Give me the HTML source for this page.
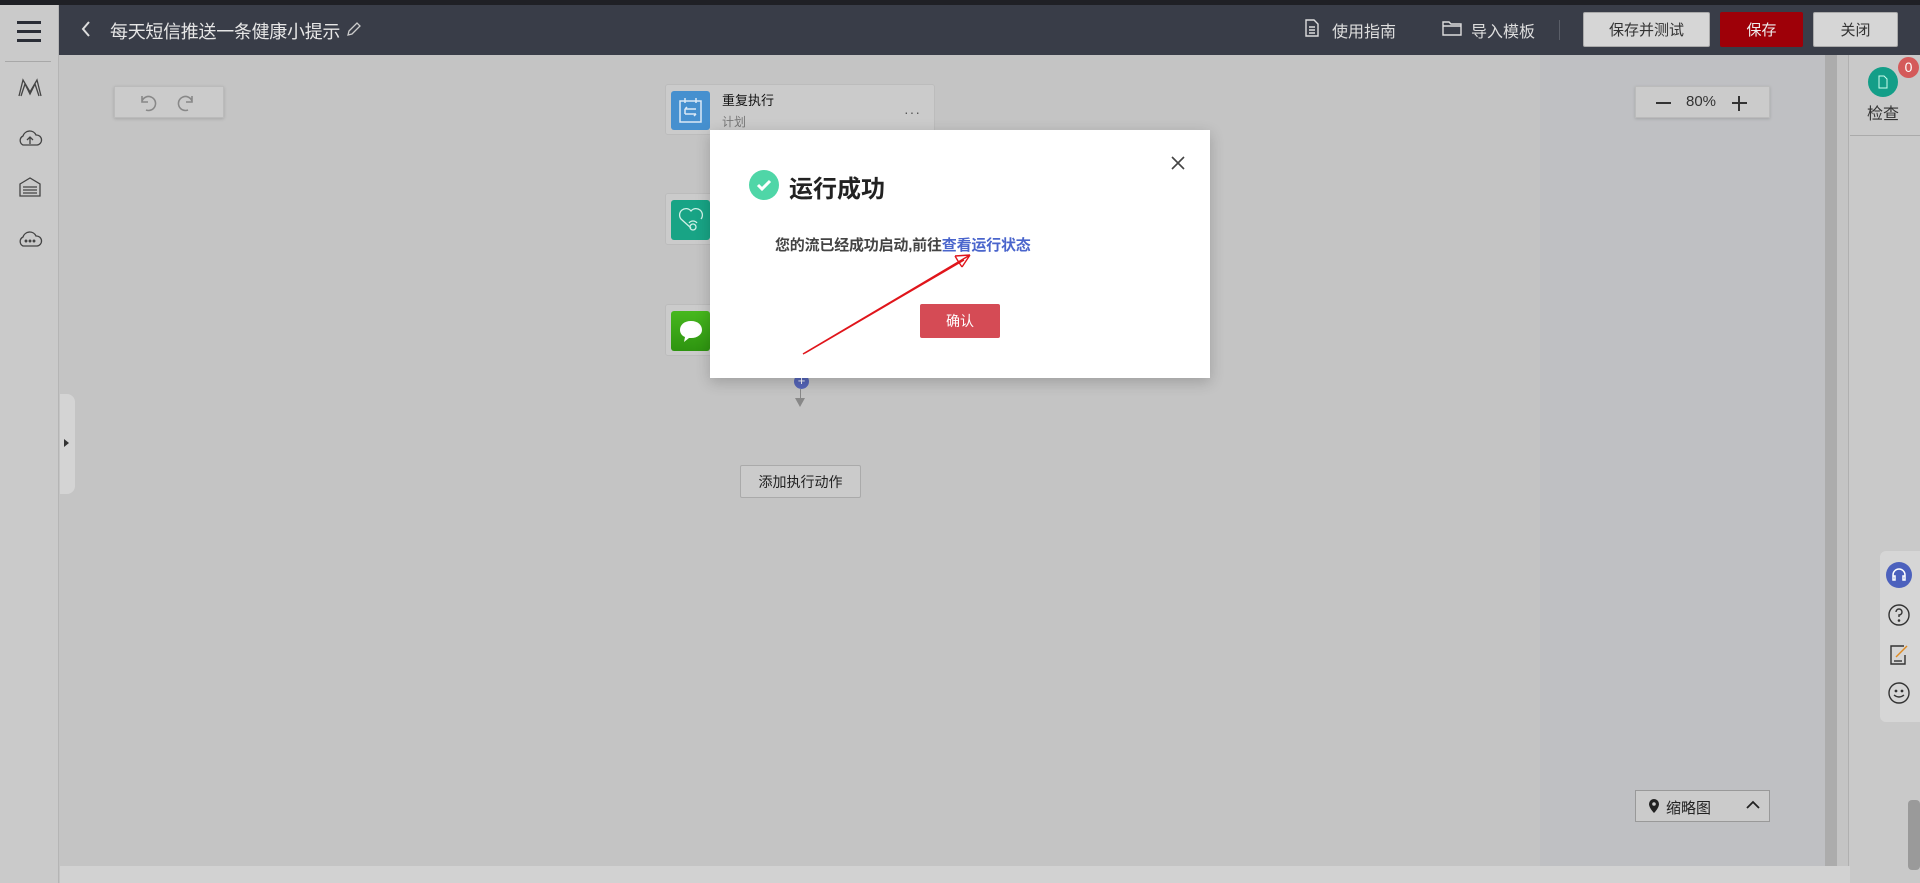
<!DOCTYPE html>
<html><head><meta charset="utf-8"><style>
*{margin:0;padding:0;box-sizing:border-box}
body{width:1920px;height:883px;overflow:hidden;background:#c4c4c4;font-family:"Liberation Sans","Noto Sans CJK SC",sans-serif;position:relative}
.a{position:absolute}
.btn{position:absolute;display:flex;align-items:center;justify-content:center;font-size:15px;border-radius:2px}
</style></head><body>
<div class="a" style="left:0;top:0;width:1920px;height:5px;background:#1f2025"></div>
<div class="a" style="left:0;top:5px;width:1920px;height:50px;background:#393d48"></div>
<div class="a" style="left:0;top:5px;width:59px;height:878px;background:#cacaca;border-right:1px solid #b5b5b5"></div>
<div class="a" style="left:17px;top:21px;width:24px;height:3px;background:#2a2d36"></div>
<div class="a" style="left:17px;top:30px;width:24px;height:3px;background:#2a2d36"></div>
<div class="a" style="left:17px;top:39px;width:24px;height:3px;background:#2a2d36"></div>
<div class="a" style="left:5px;top:61px;width:46px;height:1px;background:#a8a8a8"></div>
<svg class="a" style="left:17px;top:78px" width="26" height="20" viewBox="0 0 26 20" fill="none" stroke="#444" stroke-width="1.3"><path d="M2 18L6 2L13 14L20 2L24 18M4 18L8 6L13 16L18 6L22 18"/></svg>
<svg class="a" style="left:17px;top:128px" width="26" height="20" viewBox="0 0 26 20" fill="none" stroke="#444" stroke-width="1.3"><path d="M6 17H20A5 5 0 0 0 19 7A7 7 0 0 0 6 8A5 5 0 0 0 6 17Z"/><path d="M13 16V9M10 12L13 9L16 12"/></svg>
<svg class="a" style="left:18px;top:176px" width="24" height="22" viewBox="0 0 24 22" fill="none" stroke="#444" stroke-width="1.3"><path d="M2 8L12 2L22 8V20H2Z"/><path d="M5 11H19M5 14H19M5 17H19"/></svg>
<svg class="a" style="left:17px;top:229px" width="26" height="20" viewBox="0 0 26 20" fill="none" stroke="#444" stroke-width="1.3"><path d="M6 17H20A5 5 0 0 0 19 7A7 7 0 0 0 6 8A5 5 0 0 0 6 17Z"/><circle cx="9" cy="12" r=".8" fill="#444"/><circle cx="13" cy="12" r=".8" fill="#444"/><circle cx="17" cy="12" r=".8" fill="#444"/></svg>
<div class="a" style="left:60px;top:394px;width:15px;height:100px;background:#d4d4d4;border-radius:0 8px 8px 0"></div>
<div class="a" style="left:64px;top:439px;border-left:5px solid #333;border-top:4px solid transparent;border-bottom:4px solid transparent"></div>
<svg class="a" style="left:80px;top:20px" width="12" height="18" viewBox="0 0 12 18" fill="none" stroke="#ddd" stroke-width="2"><path d="M9 2L3 9L9 16"/></svg>
<div class="a" style="left:110px;top:18px;font-size:18px;color:#e6e6e6;letter-spacing:-0.3px">每天短信推送一条健康小提示</div>
<svg class="a" style="left:345px;top:20px" width="18" height="18" viewBox="0 0 18 18" fill="none" stroke="#ccc" stroke-width="1.3"><path d="M3 15L4 11L12 3L15 6L7 14Z"/></svg>
<svg class="a" style="left:1304px;top:18px" width="16" height="20" viewBox="0 0 16 20" fill="none" stroke="#ddd" stroke-width="1.4"><path d="M2 2H10L14 6V18H2Z M5 9H11M5 12H11M5 15H11"/></svg>
<div class="a" style="left:1332px;top:18px;font-size:16px;color:#ddd">使用指南</div>
<svg class="a" style="left:1442px;top:20px" width="20" height="16" viewBox="0 0 20 16" fill="none" stroke="#ddd" stroke-width="1.4"><path d="M1 2H7L9 4H19V15H1Z M1 6H19"/></svg>
<div class="a" style="left:1471px;top:18px;font-size:16px;color:#ddd">导入模板</div>
<div class="a" style="left:1559px;top:20px;width:1px;height:20px;background:#5a5e68"></div>
<div class="btn" style="left:1583px;top:12px;width:127px;height:35px;background:#d6d6d6;border:1px solid #aaa;color:#333">保存并测试</div>
<div class="btn" style="left:1720px;top:12px;width:83px;height:35px;background:#9e0008;color:#eee">保存</div>
<div class="btn" style="left:1813px;top:12px;width:85px;height:35px;background:#d6d6d6;border:1px solid #aaa;color:#333">关闭</div>
<div class="a" style="left:1540px;top:55px;width:285px;height:811px;background:#bfc0c3"></div>
<div class="a" style="left:1825px;top:55px;width:12px;height:811px;background:#acacac"></div>
<div class="a" style="left:1848px;top:55px;width:72px;height:828px;background:#c9c9c9;border-left:1px solid #b0b0b0"></div>
<div class="a" style="left:60px;top:866px;width:1790px;height:17px;background:#d2d2d2"></div>
<div class="a" style="left:1850px;top:135px;width:70px;height:1px;background:#aaa"></div>
<div class="a" style="left:1868px;top:67px;width:30px;height:30px;border-radius:50%;background:#139e88"></div>
<svg class="a" style="left:1877px;top:75px" width="12" height="14" viewBox="0 0 12 14" fill="none" stroke="#cfe" stroke-width="1"><path d="M2 1H7L10 4V13H2Z"/></svg>
<div class="a" style="left:1898px;top:57px;width:21px;height:21px;border-radius:50%;background:#d45a5a;color:#fff;font-size:14px;text-align:center;line-height:21px">0</div>
<div class="a" style="left:1867px;top:100px;font-size:16px;color:#333">检查</div>
<div class="a" style="left:1880px;top:551px;width:40px;height:171px;background:#d6d6d6;border-radius:6px 0 0 6px"></div>
<div class="a" style="left:1886px;top:562px;width:26px;height:26px;border-radius:50%;background:#4c61bd"></div>
<svg class="a" style="left:1890px;top:566px" width="18" height="18" viewBox="0 0 18 18" fill="none" stroke="#fff" stroke-width="1.5"><path d="M3 11V9A6 6 0 0 1 15 9V11M3 10H5V14H3ZM13 10H15V14H13Z"/></svg>
<svg class="a" style="left:1887px;top:603px" width="24" height="24" viewBox="0 0 24 24" fill="none" stroke="#333" stroke-width="1.4"><circle cx="12" cy="12" r="10"/><path d="M9 9A3 3 0 1 1 12 12V14"/><circle cx="12" cy="17.5" r=".6" fill="#333"/></svg>
<svg class="a" style="left:1888px;top:643px" width="22" height="24" viewBox="0 0 22 24" fill="none" stroke="#333" stroke-width="1.4"><path d="M16 3H3V21H17V12"/><path d="M8 14L19 3" stroke="#e08a20"/><path d="M6 18H14"/></svg>
<svg class="a" style="left:1887px;top:681px" width="24" height="24" viewBox="0 0 24 24" fill="none" stroke="#333" stroke-width="1.4"><circle cx="12" cy="12" r="10"/><path d="M7 14Q12 18 17 14"/><circle cx="9" cy="10" r=".7"/><circle cx="15" cy="10" r=".7"/></svg>
<div class="a" style="left:1908px;top:800px;width:12px;height:70px;background:#9a9a9a;border-radius:4px"></div>
<div class="a" style="left:114px;top:86px;width:110px;height:32px;background:#cbcbcb;border:1px solid #bbb;box-shadow:0 1px 3px rgba(0,0,0,.15)"></div>
<svg class="a" style="left:136px;top:91px" width="70" height="22" viewBox="0 0 70 22" fill="none" stroke="#888" stroke-width="1.6"><path d="M6 5V11H12M6 10A7 7 0 1 1 10 19"/><path d="M56 5V11H50M56 10A7 7 0 1 0 52 19"/></svg>
<div class="a" style="left:1635px;top:86px;width:135px;height:32px;background:#cbcbcb;border:1px solid #bbb;box-shadow:0 1px 3px rgba(0,0,0,.15)"></div>
<div class="a" style="left:1656px;top:102px;width:15px;height:2px;background:#333"></div>
<div class="a" style="left:1686px;top:93px;font-size:15px;color:#333">80%</div>
<div class="a" style="left:1732px;top:102px;width:15px;height:2px;background:#333"></div>
<div class="a" style="left:1738px;top:96px;width:2px;height:15px;background:#333"></div>
<div class="a" style="left:1635px;top:790px;width:135px;height:32px;background:#cbcbcb;border:1px solid #999"></div>
<svg class="a" style="left:1648px;top:798px" width="12" height="16" viewBox="0 0 12 16"><path d="M6 1A5 5 0 0 0 1 6C1 10 6 15 6 15S11 10 11 6A5 5 0 0 0 6 1Z" fill="#222"/><circle cx="6" cy="6" r="1.8" fill="#cbcbcb"/></svg>
<div class="a" style="left:1666px;top:797px;font-size:15px;color:#222">缩略图</div>
<svg class="a" style="left:1745px;top:799px" width="16" height="12" viewBox="0 0 16 12" fill="none" stroke="#222" stroke-width="1.8"><path d="M2 9L8 3L14 9"/></svg>
<div class="a" style="left:665px;top:84px;width:270px;height:51px;background:#cbcbcb;border:1px solid #bcbcbc;border-radius:3px"></div>
<div class="a" style="left:671px;top:91px;width:39px;height:39px;background:#4690cf;border-radius:3px"></div>
<svg class="a" style="left:677px;top:96px" width="27" height="29" viewBox="0 0 27 29" fill="none" stroke="#dbe9f6" stroke-width="1.5"><rect x="3" y="5" width="21" height="21"/><path d="M8 2V7M19 2V7M8 13H19M8 13L10 11M19 18H8M19 18L17 20M8 13V18"/></svg>
<div class="a" style="left:722px;top:90px;font-size:13px;color:#111">重复执行</div>
<div class="a" style="left:722px;top:113px;font-size:12px;color:#777">计划</div>
<div class="a" style="left:904px;top:104px;font-size:14px;color:#555;letter-spacing:1px">···</div>
<div class="a" style="left:665px;top:193px;width:100px;height:52px;background:#cbcbcb;border:1px solid #bcbcbc;border-radius:3px"></div>
<div class="a" style="left:671px;top:200px;width:39px;height:40px;background:#18a485;border-radius:3px"></div>
<svg class="a" style="left:676px;top:206px" width="30" height="28" viewBox="0 0 30 28" fill="none" stroke="#d0f0e6" stroke-width="1.3"><path d="M15 22L5 13A6 6 0 0 1 15 5A6 6 0 0 1 25 13"/><circle cx="17" cy="21" r="3"/><path d="M13 17A5 5 0 0 1 21 17"/></svg>
<div class="a" style="left:665px;top:304px;width:100px;height:52px;background:#cbcbcb;border:1px solid #bcbcbc;border-radius:3px"></div>
<div class="a" style="left:671px;top:311px;width:39px;height:40px;background:linear-gradient(#47b81e,#2e9410);border-radius:3px"></div>
<svg class="a" style="left:677px;top:317px" width="28" height="28" viewBox="0 0 28 28"><path d="M14 4C7 4 3 8 3 13C3 16 5 19 8 20L7 25L12 21C13 21 13 21 14 21C21 21 25 17 25 13C25 8 21 4 14 4Z" fill="#fff"/></svg>
<div class="a" style="left:794px;top:374px;width:15px;height:15px;border-radius:50%;background:#5565b8;color:#fff;font-size:13px;line-height:14px;text-align:center">+</div>
<div class="a" style="left:800px;top:389px;width:1px;height:10px;background:#888"></div>
<div class="a" style="left:795px;top:398px;border-top:9px solid #888;border-left:5px solid transparent;border-right:5px solid transparent"></div>
<div class="btn" style="left:740px;top:465px;width:121px;height:33px;background:#cbcbcb;border:1px solid #aaa;color:#222;font-size:14px">添加执行动作</div>
<div class="a" style="left:710px;top:130px;width:500px;height:248px;background:#fff;box-shadow:0 4px 14px rgba(0,0,0,.2)"></div>
<svg class="a" style="left:1170px;top:155px" width="16" height="16" viewBox="0 0 16 16" stroke="#444" stroke-width="1.6"><path d="M2 2L14 14M14 2L2 14"/></svg>
<div class="a" style="left:749px;top:170px;width:30px;height:30px;border-radius:50%;background:#4fd6a7"></div>
<svg class="a" style="left:749px;top:170px" width="30" height="30" viewBox="0 0 30 30" fill="none" stroke="#fff" stroke-width="3"><path d="M9 15L13 19L21 11"/></svg>
<div class="a" style="left:789px;top:169px;font-size:24px;font-weight:bold;color:#222">运行成功</div>
<div class="a" style="left:775px;top:234px;font-size:15px;font-weight:bold;color:#444;letter-spacing:-0.2px">您的流已经成功启动,前往<span style="color:#4a65cc">查看运行状态</span></div>
<div class="btn" style="left:920px;top:304px;width:80px;height:34px;background:#d54b55;color:#fff;font-size:14px">确认</div>
<svg class="a" style="left:790px;top:245px" width="200" height="120" viewBox="0 0 200 120" fill="none" stroke="#e0151b" stroke-width="1.4"><path d="M13 109L180 10M15 108L174 15M180 10L165 11M180 10L172 22M165 11L168 16M172 22L168 16"/></svg>
</body></html>
